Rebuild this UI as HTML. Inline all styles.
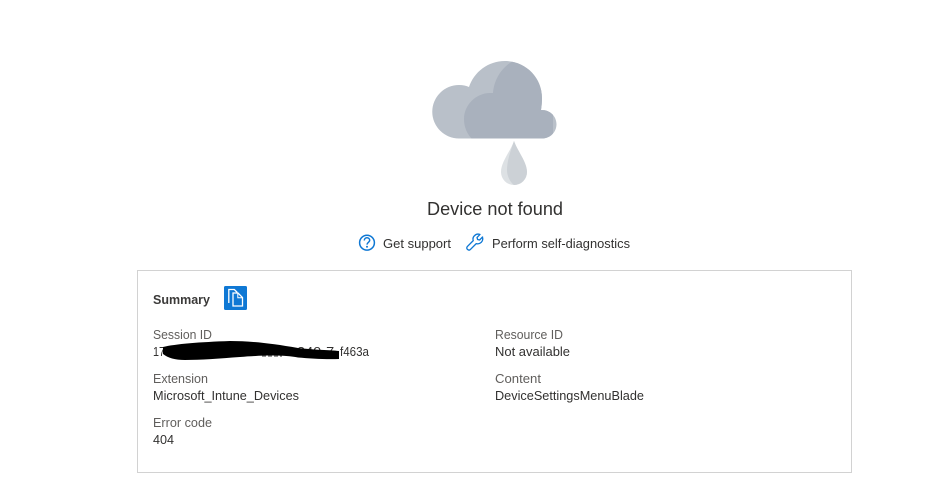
<!DOCTYPE html>
<html>
<head>
<meta charset="utf-8">
<style>
html,body{margin:0;padding:0;background:#fff;width:937px;height:501px;overflow:hidden}
svg{display:block}
text{font-family:"Liberation Sans",Arial,sans-serif;font-size:12.5px}
.l{fill:#605e5c}
.v{fill:#323130}
</style>
</head>
<body>
<svg width="937" height="501" viewBox="0 0 937 501" xmlns="http://www.w3.org/2000/svg">
<defs>
<clipPath id="big"><path d="M459 138.500a26.750 26.750 0 0 1 0-53.500c4 0 7 .6 10 2 5-15 19-26 36-26 20 0 37 16 37 37 0 4-.300 8-1 12h1c8 0 14.500 6.300 14.500 14.250s-6.500 14.250-14.500 14.250z"/></clipPath>
</defs>
<!-- cloud -->
<path fill="#b9c0c9" d="M459 138.500a26.750 26.750 0 0 1 0-53.500c4 0 7 .6 10 2 5-15 19-26 36-26 20 0 37 16 37 37 0 4-.300 8-1 12h1c8 0 14.500 6.300 14.500 14.250s-6.500 14.250-14.500 14.250z"/>
<g clip-path="url(#big)">
<path fill="#a9b1bd" d="M472 139c-5-5-8-12-8-20 0-14 12-26 26-26h3c1-13 8-25 20-32h40v78z"/>
</g>
<!-- drop -->
<path fill="#dde1e4" d="M514 141C510 152 501 162 501 172a13 13 0 0 0 26 0C527 162 518 152 514 141z"/>
<path fill="#ccd1d6" d="M514 141C518 152 527 162 527 172A13 13 0 0 1 514 185C510 182 507 176 507 170C507 160 511 150 514 141z"/>

<text x="427" y="215" style="font-size:18px" fill="#323130" textLength="136" lengthAdjust="spacingAndGlyphs">Device not found</text>

<!-- help icon -->
<circle cx="367" cy="242.700" r="7.400" fill="none" stroke="#0f78d4" stroke-width="1.500"/>
<path d="M364.300 240.500c0-1.600 1.200-2.700 2.700-2.700s2.700 1.100 2.700 2.500c0 2.200-2.700 2.100-2.700 4.300" fill="none" stroke="#0f78d4" stroke-width="1.500"/>
<circle cx="367" cy="246.800" r="1" fill="#0f78d4"/>
<text x="383" y="248" class="v" textLength="68" lengthAdjust="spacingAndGlyphs">Get support</text>

<!-- wrench icon -->
<path transform="translate(57.800,28.800) scale(.88)" d="M482.700 236.600l-3.400 3.400-2.300-.6-.6-2.300 3.400-3.400c-2.300-.8-4.900-.2-6.400 1.500-1.500 1.500-1.900 3.700-1.300 5.500l-6.600 6.600c-1 1-1 2.500 0 3.400s2.400 1 3.400 0l6.600-6.600c1.900.6 4 .2 5.500-1.300 1.700-1.600 2.300-4 1.500-6.200z" fill="none" stroke="#0f78d4" stroke-width="1.500" stroke-linejoin="round"/>
<text x="492" y="248" class="v" textLength="138" lengthAdjust="spacingAndGlyphs">Perform self-diagnostics</text>

<!-- box -->
<rect x="137.500" y="270.500" width="714" height="202" fill="#fff" stroke="#d2d2d2" stroke-width="1"/>

<text x="153" y="304" style="font-weight:bold" fill="#3b3a39" textLength="57" lengthAdjust="spacingAndGlyphs">Summary</text>

<!-- copy button -->
<rect x="224" y="286" width="23" height="24" rx="1.500" fill="#0f78d4"/>
<path d="M228.800 303v-13.500h5.500l3 3" fill="none" stroke="#fff" stroke-width="1.300"/>
<path d="M233 293h5l4.500 4.500v8.500H233z" fill="#0f78d4" stroke="#fff" stroke-width="1.300"/>
<path d="M237.800 293.500v4.200h4.200" fill="none" stroke="#fff" stroke-width="1"/>

<text x="153" y="339" class="l" textLength="59" lengthAdjust="spacingAndGlyphs">Session ID</text>
<text x="153" y="356" class="v" textLength="12" lengthAdjust="spacingAndGlyphs">17</text>
<text x="297" y="356" class="v" textLength="42" lengthAdjust="spacingAndGlyphs">340-7-</text>
<text x="340" y="356" class="v" textLength="29" lengthAdjust="spacingAndGlyphs">f463a</text>
<line x1="262" y1="356" x2="282" y2="356" stroke="#777" stroke-width="1.500" stroke-dasharray="4 2"/>
<path fill="#000" d="M163 347C175 344 200 342 230 341C250 341 270 343 298 348C315 350 330 350 339 351L339 359C325 359.500 310 358.500 298 357.500C285 355 265 355 240 357C220 358.500 200 360 185 360C175 360 168 358 163 354Z"/>

<text x="153" y="383" class="l" textLength="55" lengthAdjust="spacingAndGlyphs">Extension</text>
<text x="153" y="400" class="v" textLength="146" lengthAdjust="spacingAndGlyphs">Microsoft_Intune_Devices</text>

<text x="153" y="427" class="l" textLength="59" lengthAdjust="spacingAndGlyphs">Error code</text>
<text x="153" y="444" class="v" textLength="21" lengthAdjust="spacingAndGlyphs">404</text>

<text x="495" y="339" class="l" textLength="68" lengthAdjust="spacingAndGlyphs">Resource ID</text>
<text x="495" y="356" class="v" textLength="75" lengthAdjust="spacingAndGlyphs">Not available</text>

<text x="495" y="383" class="l" textLength="46" lengthAdjust="spacingAndGlyphs">Content</text>
<text x="495" y="400" class="v" textLength="149" lengthAdjust="spacingAndGlyphs">DeviceSettingsMenuBlade</text>
</svg>
</body>
</html>
